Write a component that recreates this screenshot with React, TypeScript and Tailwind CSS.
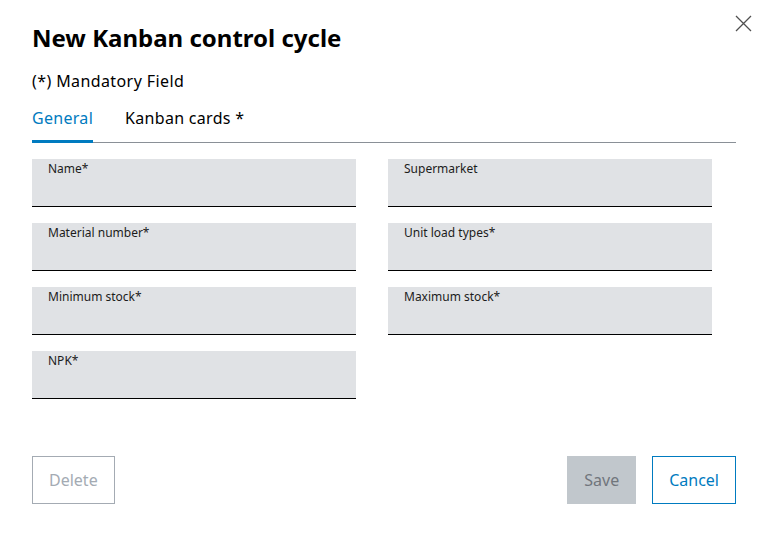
import React from "react";

const fields: { label: string }[][] = [
  [{ label: "Name*" }, { label: "Supermarket" }],
  [{ label: "Material number*" }, { label: "Unit load types*" }],
  [{ label: "Minimum stock*" }, { label: "Maximum stock*" }],
  [{ label: "NPK*" }],
];

function Field({ label }: { label: string }) {
  return (
    <div className="h-12 border-b border-black bg-[#e0e2e5] px-4 pt-[2px]">
      <div className="text-xs leading-4 text-[#1c1c1c]">{label}</div>
    </div>
  );
}

export default function App() {
  return (
    <div className="relative h-[536px] w-[768px] bg-white font-['Noto_Sans',sans-serif] text-black">
      <button
        type="button"
        className="absolute right-[16px] top-[15px] text-[#505050]"
        aria-label="Close"
      >
        <svg width="17" height="17" viewBox="0 0 17 17" fill="none">
          <path d="M1 1L16 16M16 1L1 16" stroke="currentColor" strokeWidth="1.3" />
        </svg>
      </button>

      <div className="px-8 pt-[22px]">
        <h1 className="text-2xl font-bold leading-8">New Kanban control cycle</h1>
        <p className="mt-[15px] text-base leading-6 tracking-[0.4px]">(*) Mandatory Field</p>

        <div className="mt-[13px] flex border-b border-[#8a9097] tracking-[0.3px]">
          <div className="-mb-px border-b-[3px] border-[#007bc0] pb-[10px] text-base leading-6 text-[#007bc0]">
            General
          </div>
          <div className="ml-8 pb-[12px] text-base leading-6">Kanban cards *</div>
        </div>

        <div className="mt-4 grid grid-cols-[324px_324px] gap-x-8 gap-y-4">
          {fields.flat().map((f) => (
            <Field key={f.label} label={f.label} />
          ))}
        </div>

        <div className="mt-[57px] flex items-center">
          <button
            type="button"
            className="h-12 border border-[#a4abb3] px-4 text-base text-[#a4abb3]"
          >
            Delete
          </button>
          <div className="flex-1" />
          <button
            type="button"
            className="h-12 bg-[#c1c7cc] px-[17px] text-base text-[#71767c]"
          >
            Save
          </button>
          <button
            type="button"
            className="ml-4 h-12 border border-[#007bc0] px-4 text-base text-[#007bc0]"
          >
            Cancel
          </button>
        </div>
      </div>
    </div>
  );
}
